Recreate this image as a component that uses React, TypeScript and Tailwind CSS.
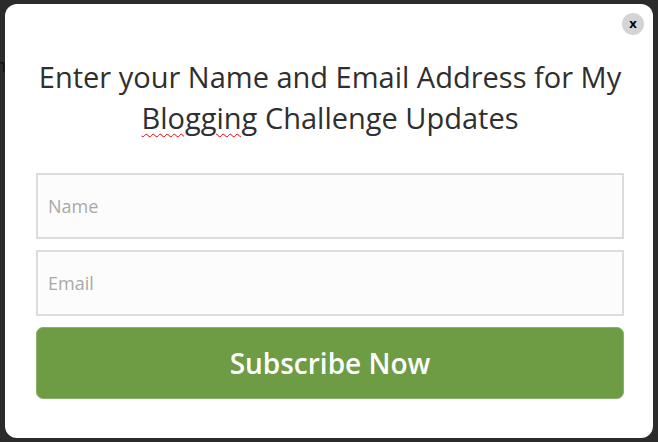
import React from 'react';

const App: React.FC = () => (
  <div className="w-[658px] h-[442px] bg-[#2b2b2b] pt-[4px] pl-[5px] relative overflow-hidden" style={{ fontFamily: '"Open Sans", sans-serif' }}>
    <span className="absolute left-[-5px] top-[52px] text-[18px] text-[#111]">n</span>
    <div className="relative w-[648px] h-[434px] bg-white rounded-[12px] pl-[31px] pr-[29px] pt-[52px]">
      <button className="absolute right-[9px] top-[9px] w-[22px] h-[22px] rounded-full bg-[#d4d4d4] flex items-center justify-center text-[13px] font-bold text-black leading-none pb-[2px]">
        x
      </button>
      <h2 className="text-center text-[29px] leading-[41px] text-[#2f2f2f] font-medium -mx-[6px]">
        Enter your Name and Email Address for My{' '}
        <span className="underline decoration-wavy decoration-red-600 decoration-1 underline-offset-[4px]">Blogging</span>{' '}
        Challenge Updates
      </h2>
      <div className="mt-[35px] flex flex-col gap-[11px]">
        <input
          placeholder="Name"
          className="h-[66px] w-full border-2 border-[#dcdcdc] bg-[#fcfcfc] px-[10px] text-[18px] text-[#555] placeholder:text-[#a9a9a9] outline-none"
        />
        <input
          placeholder="Email"
          className="h-[66px] w-full border-2 border-[#dcdcdc] bg-[#fcfcfc] px-[10px] text-[18px] text-[#555] placeholder:text-[#a9a9a9] outline-none"
        />
        <button className="h-[72px] w-full rounded-[7px] bg-[#6e9c44] border border-[#8ab06a] text-white text-[28px] font-semibold">
          Subscribe Now
        </button>
      </div>
    </div>
  </div>
);

export default App;
